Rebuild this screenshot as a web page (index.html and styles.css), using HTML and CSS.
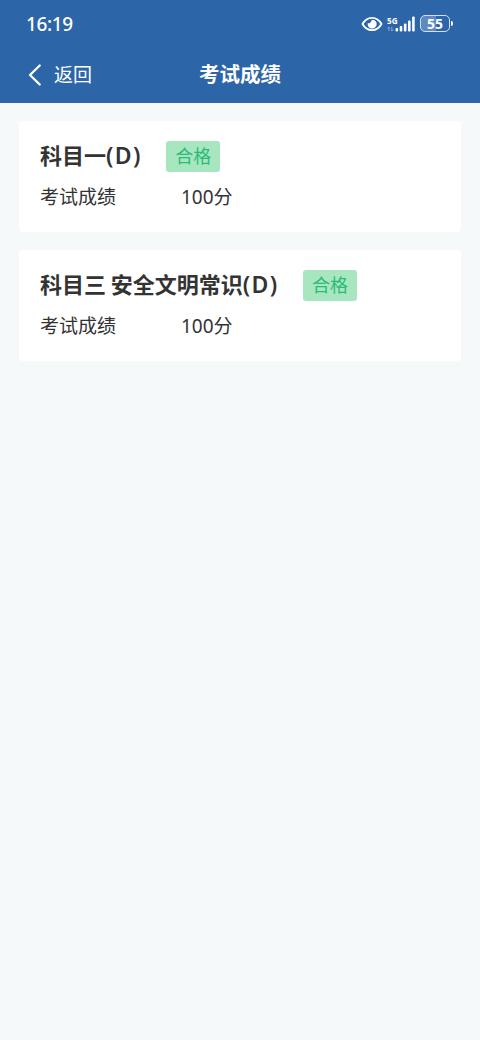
FILE: index.html
```html
<!DOCTYPE html>
<html lang="zh-CN">
<head>
<meta charset="utf-8">
<title>考试成绩</title>
<link rel="stylesheet" href="styles.css">
</head>
<body>
<header class="header">
  <div class="status">
    <span class="time">16:19</span>
    <div class="indicators">
      <svg class="eye" width="22" height="16" viewBox="0 0 22 16"><path d="M1.500 8C6-.2 16-.2 20.500 8C16 16.200 6 16.200 1.500 8Z" fill="none" stroke="#fff" stroke-width="1.900" stroke-linejoin="round"/><path d="M10.500 4.200C10.200 6.800 8.500 7.500 6.700 7.200C6 14 15.500 14.200 15.700 8C15.700 5 13.300 3.200 10.500 4.200Z" fill="#fff"/></svg>
      <svg class="signal" width="28" height="24" viewBox="0 -3.500 28 24"><g fill="#fff"><rect x="8.500" y="12.500" width="2.600" height="3.500" rx="1"/><rect x="12.700" y="10.500" width="2.600" height="5.500" rx="1"/><rect x="16.900" y="8" width="2.600" height="8" rx="1"/><rect x="21" y="5" width="2.600" height="11" rx="1"/><rect x="25.100" y="1" width="2.600" height="15" rx="1"/></g><path d="M2 15.500V11.500L.8 13M4.800 11.500V15.500L6 14" fill="none" stroke="#fff" stroke-opacity=".45"/><text x="0" y="8" class="network" textLength="10.500" lengthAdjust="spacingAndGlyphs">5G</text></svg>
      <div class="battery">55</div><i class="battery-tip"></i>
    </div>
  </div>
  <nav class="nav">
    <a class="back"><svg width="14" height="22" viewBox="0 0 14 22"><path d="M11.700 1.500L2 11L11.700 20.500" fill="none" stroke="#fff" stroke-width="2.300" stroke-linecap="round" stroke-linejoin="round"/></svg><span class="back-text">返回</span></a>
    <h1 class="title">考试成绩</h1>
  </nav>
</header>
<main class="results">
  <section class="card">
    <div class="heading"><h2 class="subject">科目一<span class="grade">(D)</span></h2><span class="badge">合格</span></div>
    <div class="row"><span class="label">考试成绩</span><span>100分</span></div>
  </section>
  <section class="card">
    <div class="heading"><h2 class="subject">科目三 安全文明常识<span class="grade">(D)</span></h2><span class="badge">合格</span></div>
    <div class="row"><span class="label">考试成绩</span><span>100分</span></div>
  </section>
</main>
</body>
</html>
```
FILE: styles.css
```css
* { box-sizing: border-box; }
body { margin: 0; min-height: 1040px; background: #f5f9fa; color: #333; font-family: "Noto Sans", "Noto Sans CJK SC", sans-serif; }
.header { height: 103px; background: #2c65a8; color: #fff; }
.status { height: 47px; padding: 0 27px 0 26px; display: flex; align-items: center; justify-content: space-between; }
.time { font-size: 19px; font-weight: 500; letter-spacing: -.4px; }
.indicators { display: flex; align-items: center; }
.signal { margin: 0 5px 0 4px; }
.network { font: bold 9.500px "Noto Sans"; fill: #fff; }
.battery { width: 30px; height: 17px; border: 1.500px solid #d5e0ee; border-radius: 5px; background: linear-gradient(90deg, #5f8abf 55%, transparent 55%); font-size: 14px; font-weight: 700; line-height: 15px; text-align: center; }
.battery-tip { width: 2px; height: 5px; margin-left: 1px; background: #fff; border-radius: 0 2px 2px 0; }
.nav { height: 56px; padding: 0 28px; display: grid; grid-template-columns: 1fr auto 1fr; align-items: center; }
.back { display: flex; align-items: center; gap: 12px; font-size: 19px; }
.back-text { padding-bottom: 2px; }
.title { margin: 0; padding-bottom: 4px; font-size: 20.500px; font-weight: 600; }
.results { padding: 18px 19px; display: grid; gap: 18px; }
.card { height: 111px; padding: 20px 21px; background: #fff; border-radius: 4px; }
.heading { display: flex; align-items: center; gap: 25px; height: 31px; }
.subject { margin: 0; padding-bottom: 3px; font-size: 22px; line-height: 30px; font-weight: 700; word-spacing: -1px; }
.grade { display: inline-block; width: 35.200px; font-size: 23px; line-height: 24px; font-weight: 600; letter-spacing: 1.400px; }
.badge { width: 54px; height: 31px; border-radius: 3px; background: #a8e6c0; color: #2abb78; font-size: 18px; line-height: 30px; text-align: center; }
.row { display: flex; margin-top: 10px; font-size: 19px; line-height: 30px; }
.label { width: 141px; }
```
